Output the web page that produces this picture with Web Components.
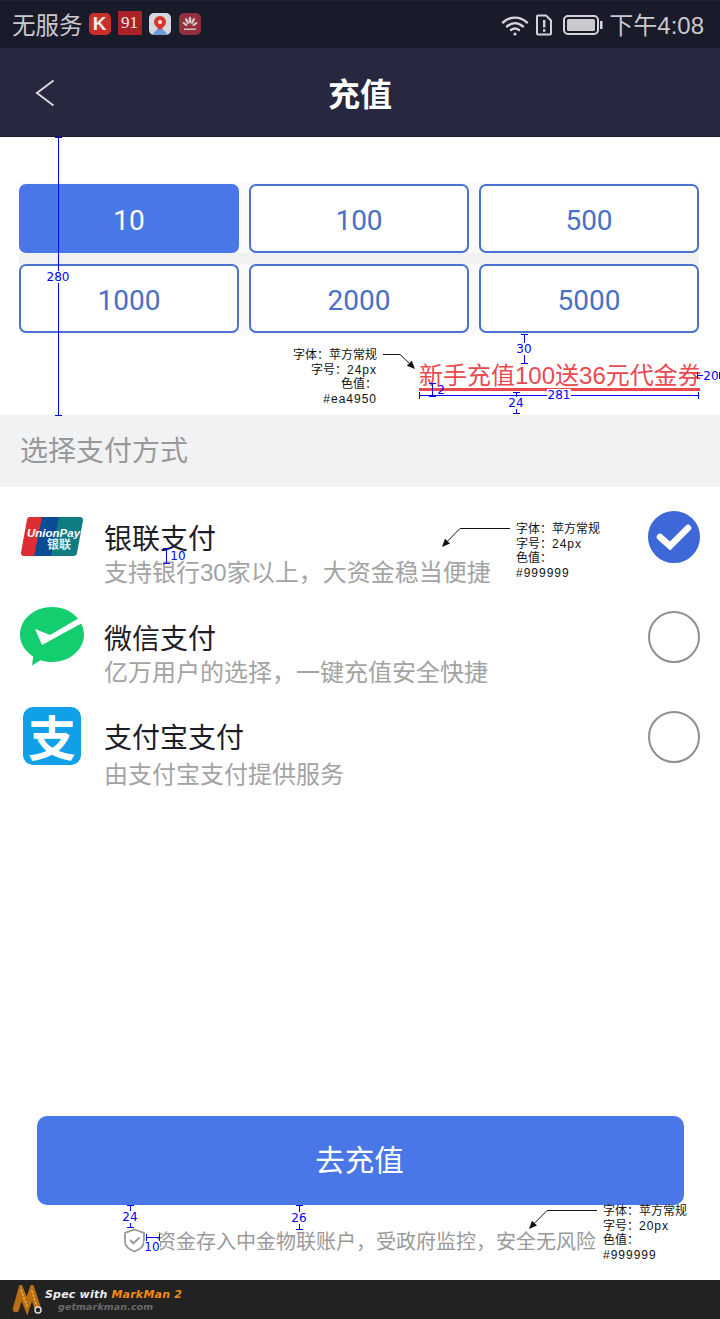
<!DOCTYPE html>
<html lang="zh">
<head>
<meta charset="utf-8">
<title>充值</title>
<style>
html,body{margin:0;padding:0;background:#fff}
body{font-family:"Liberation Sans","Noto Sans CJK SC",sans-serif}
</style>
</head>
<body>
<recharge-page></recharge-page>

<script>
const CJK = '"Liberation Sans","Noto Sans CJK SC",sans-serif'

class StatusBar extends HTMLElement{
    constructor(){
        super()
        this.attachShadow({mode:'open'})
    }
    connectedCallback(){
        this.shadowRoot.innerHTML = `
        <style>
            :host{display:flex;align-items:center;height:48px;background:#191a2a;color:#c9c9ce;font-family:${CJK};font-size:24px;padding:0 16px 0 12px;box-sizing:border-box;border-top:1px solid #23243a}
            .left,.right{display:flex;align-items:center}
            .left span{font-size:23.500px;margin-top:-2px}
            .right{margin-left:auto}
            .app{width:22px;height:22px;border-radius:5px;display:flex;align-items:center;justify-content:center;font-weight:bold;overflow:hidden;margin-top:-1px}
            .k{background:#c9302c;color:#eee;font-size:19px;margin-left:6px}
            .n91{background:#a82228;color:#eee;font-size:17px;border-radius:0;width:24px;height:24px;font-weight:normal;margin-left:7px;margin-top:-3px;font-family:"Liberation Serif",serif}
            .map{background:#d4d8dc;margin-left:7px}
            .hw{background:#93303c;margin-left:8px}
            svg{display:block}
            .time{margin-left:6px;margin-top:-2px}
        </style>
        <div class="left">
            <span>无服务</span>
            <div class="app k">K</div>
            <div class="app n91">91</div>
            <div class="app map"><svg width="22" height="22" viewBox="0 0 22 22"><path d="M3 22L11 13l8 9z" fill="#6d9ad8"/><path d="M11 3a6 6 0 0 1 6 6c0 4-6 8-6 8s-6-4-6-8a6 6 0 0 1 6-6z" fill="#d8342c"/><circle cx="11" cy="9" r="2" fill="#eee"/></svg></div>
            <div class="app hw"><svg width="22" height="22" viewBox="0 0 22 22"><g fill="#d9c8cc"><ellipse cx="11" cy="7" rx="1.3" ry="3.6"/><ellipse cx="8" cy="8" rx="1.2" ry="3.4" transform="rotate(-25 8 8)"/><ellipse cx="14" cy="8" rx="1.2" ry="3.4" transform="rotate(25 14 8)"/><ellipse cx="6" cy="11" rx="1.1" ry="3" transform="rotate(-55 6 11)"/><ellipse cx="16" cy="11" rx="1.1" ry="3" transform="rotate(55 16 11)"/><rect x="5" y="15.5" width="12" height="1.4"/></g></svg></div>
        </div>
        <div class="right">
            <svg width="28" height="24" viewBox="0 0 28 24" fill="none" stroke="#d4d4d8" stroke-width="2.4" stroke-linecap="round"><path d="M2 9.5C9 3 19 3 26 9.5"/><path d="M6 13.5c5-4.4 11-4.4 16 0"/><path d="M10 17c2.600-2 5.400-2 8 0"/><circle cx="14" cy="21" r="1.600" fill="#d4d4d8" stroke="none"/></svg>
            <svg style="margin-left:6px" width="18" height="22" viewBox="0 0 18 22"><path d="M2 2.500a1 1 0 0 1 1-1h8l5 5v13a1 1 0 0 1-1 1H3a1 1 0 0 1-1-1z" fill="none" stroke="#d4d4d8" stroke-width="2"/><rect x="8" y="6" width="2.400" height="7.500" fill="#d4d4d8"/><rect x="8" y="15.200" width="2.400" height="2.600" fill="#d4d4d8"/></svg>
            <svg style="margin-left:10px" width="40" height="22" viewBox="0 0 40 22"><rect x="1" y="2" width="34" height="18" rx="4" fill="none" stroke="#d4d4d8" stroke-width="2"/><rect x="4" y="5" width="28" height="12" rx="1.500" fill="#c9c9ce"/><rect x="37" y="7" width="2.500" height="8" fill="#d4d4d8"/></svg>
            <span class="time">下午4:08</span>
        </div>
        `
    }
}
customElements.define('status-bar', StatusBar)

class NavBar extends HTMLElement{
    constructor(){
        super()
        this.attachShadow({mode:'open'})
    }
    connectedCallback(){
        this.shadowRoot.innerHTML = `
        <style>
            :host{display:flex;align-items:center;justify-content:center;position:relative;height:89px;background:#27273f;color:#fff;font-family:${CJK};border-bottom:1px solid #1a1a2a;box-sizing:border-box}
            h1{margin:0;font-size:32px;font-weight:bold}
            svg{position:absolute;left:35px;top:31px}
        </style>
        <svg width="20" height="28" viewBox="0 0 20 28" fill="none" stroke="#d8d8de" stroke-width="2"><path d="M18.500 1.500L2 14l16.500 12.500"/></svg>
        <h1><slot></slot></h1>
        `
    }
}
customElements.define('nav-bar', NavBar)

class AmountTile extends HTMLElement{
    constructor(){
        super()
        this.attachShadow({mode:'open'})
    }
    connectedCallback(){
        this.shadowRoot.innerHTML = `
        <style>
            :host{display:flex;align-items:center;justify-content:center;height:69px;padding-top:3px;box-sizing:border-box;border:2px solid #4a72d0;border-radius:7px;background:#fff;color:#4a6fc9;font-family:Roboto,sans-serif;font-size:28px}
            :host([selected]){background:#4a77e8;border-color:#4a77e8;color:#fff}
        </style>
        <slot></slot>
        `
    }
}
customElements.define('amount-tile', AmountTile)

class AmountGrid extends HTMLElement{
    constructor(){
        super()
        this.attachShadow({mode:'open'})
    }
    connectedCallback(){
        this.shadowRoot.innerHTML = `
        <style>
            :host{display:grid;grid-template-columns:repeat(3,220px);column-gap:10px;row-gap:11px;margin:45px 21px 0 19px;padding:2px 0;background:linear-gradient(#fafafb 71px,#f0f1f3 71px,#f0f1f3 82px,#fafafb 82px)}
        </style>
        <slot></slot>
        `
    }
}
customElements.define('amount-grid', AmountGrid)

class PromoLine extends HTMLElement{
    constructor(){
        super()
        this.attachShadow({mode:'open'})
    }
    connectedCallback(){
        this.shadowRoot.innerHTML = `
        <style>
            :host{display:flex;justify-content:flex-end;height:80px;padding:25px 20px 0 0;box-sizing:border-box;font-family:${CJK}}
            span{display:block;width:281px;height:31px;line-height:32px;font-size:24px;color:#ea4950;border-bottom:3px solid #ea4950;white-space:nowrap;box-sizing:border-box;text-align:right}
        </style>
        <span><slot></slot></span>
        `
    }
}
customElements.define('promo-line', PromoLine)

class SectionHead extends HTMLElement{
    constructor(){
        super()
        this.attachShadow({mode:'open'})
    }
    connectedCallback(){
        this.shadowRoot.innerHTML = `
        <style>
            :host{display:flex;align-items:center;height:72px;padding-left:20px;padding-bottom:5px;box-sizing:border-box;background:#f1f2f4;color:#999;font-family:${CJK};font-size:28px}
        </style>
        <slot></slot>
        `
    }
}
customElements.define('section-head', SectionHead)

class PayRow extends HTMLElement{
    constructor(){
        super()
        this.attachShadow({mode:'open'})
    }
    connectedCallback(){
        this.shadowRoot.innerHTML = `
        <style>
            :host{display:flex;align-items:center;height:100px;padding:0 20px;box-sizing:border-box;font-family:${CJK}}
            .logo{width:84px;height:64px;flex:none}
            .txt{display:flex;flex-direction:column;flex:1;margin-top:38px}
            .name{font-size:28px;line-height:34px;color:#1d1d28}
            .sub{font-size:24px;line-height:32px;color:#a3a3a3;white-space:nowrap}
            .radio{width:52px;height:52px;flex:none;box-sizing:border-box;border-radius:50%;border:2px solid #8f8f8f;display:flex;align-items:center;justify-content:center}
            :host([checked]) .radio{background:#3e68d8;border-color:#3e68d8}
            svg{display:none}
            :host([checked]) svg{display:block}
        </style>
        <div class="logo"><slot name="logo"></slot></div>
        <div class="txt">
            <div class="name"><slot name="name"></slot></div>
            <div class="sub"><slot name="sub"></slot></div>
        </div>
        <div class="radio"><svg width="36" height="30" viewBox="0 0 36 30" fill="none" stroke="#fff" stroke-width="6.500" stroke-linecap="round"><path d="M4 15l10 9L32 6"/></svg></div>
        `
    }
}
customElements.define('pay-row', PayRow)

class PayLogo extends HTMLElement{
    constructor(){
        super()
        this.attachShadow({mode:'open'})
    }
    connectedCallback(){
        const kind = this.getAttribute('kind')
        let html = ''
        if (kind == 'union') {
            html = `<svg width="64" height="40" viewBox="0 0 64 40" style="margin-top:12px"><path d="M9 0h18l-8 39H4a3 3 0 0 1-3-3.600L7 2.500A3 3 0 0 1 9 0z" fill="#df2e33"/><path d="M22 0h21l-8 39H14z" fill="#0d4c94"/><path d="M39 0h21a3 3 0 0 1 3 3.500L57 36a3.500 3.500 0 0 1-3.500 3H31z" fill="#0f7c82"/><text x="7" y="20" font-family="Liberation Sans" font-size="11.500" font-weight="bold" font-style="italic" fill="#fff">UnionPay</text><text x="27" y="32" font-family="Noto Sans CJK SC" font-size="12" font-weight="bold" fill="#dfeef0">银联</text></svg>`
        } else if (kind == 'wechat') {
            html = `<svg width="64" height="60" viewBox="0 0 64 60" style="margin-top:2px"><path d="M32 0c17.600 0 32 12 32 27.500S49.600 55 32 55c-4 0-8-.6-11.500-1.800L12 58.500l1.200-9C5.200 44.500 0 36.800 0 27.500 0 12 14.400 0 32 0z" fill="#14cd6e"/><path d="M15 22l15 6L59 11l5 4-42 23z" fill="#fff"/></svg>`
        } else {
            html = `<div class="ali">支</div>`
        }
        this.shadowRoot.innerHTML = `
        <style>
            :host{display:block}
            svg{display:block}
            .ali{width:58px;height:58px;margin:2px 0 0 3px;border-radius:10px;background:#0fa0e8;color:#fff;font-family:"Noto Sans CJK SC",sans-serif;font-weight:bold;font-size:48px;line-height:56px;text-align:center}
        </style>
        ${html}
        `
    }
}
customElements.define('pay-logo', PayLogo)

class ChargeButton extends HTMLElement{
    constructor(){
        super()
        this.attachShadow({mode:'open'})
    }
    connectedCallback(){
        this.shadowRoot.innerHTML = `
        <style>
            :host{display:flex;align-items:center;justify-content:center;height:89px;padding:0 2px 5px 0;box-sizing:border-box;margin:0 36px 0 37px;border-radius:10px;background:#4a77e8;color:#fff;font-family:${CJK};font-size:29.500px}
        </style>
        <slot></slot>
        `
    }
}
customElements.define('charge-button', ChargeButton)

class SafeNote extends HTMLElement{
    constructor(){
        super()
        this.attachShadow({mode:'open'})
    }
    connectedCallback(){
        this.shadowRoot.innerHTML = `
        <style>
            :host{display:flex;align-items:center;height:75px;padding:0 0 4px 123px;box-sizing:border-box;color:#999;font-family:${CJK};font-size:20px;white-space:nowrap}
            svg{flex:none;margin-right:10px}
        </style>
        <svg width="23" height="25" viewBox="0 0 23 25" fill="none" stroke="#999" stroke-width="1.800"><path d="M11.500 1.500l9.500 3.500v8c0 5-4 8.500-9.500 10.500C6 21.500 2 18 2 13V5z"/><path d="M7 12l3.500 3.500 6-6"/></svg>
        <slot></slot>
        `
    }
}
customElements.define('safe-note', SafeNote)

class MarkmanBar extends HTMLElement{
    constructor(){
        super()
        this.attachShadow({mode:'open'})
    }
    connectedCallback(){
        this.shadowRoot.innerHTML = `
        <style>
            :host{display:flex;align-items:center;height:39px;background:#222;padding-left:12px;font-family:"DejaVu Sans",sans-serif;font-weight:bold;font-style:italic}
            svg{flex:none}
            .t{margin:2px 0 0 3px;display:flex;flex-direction:column}
            .a{font-size:11px;line-height:13px;color:#eee;letter-spacing:.2px;white-space:nowrap}
            .a b{color:#f08c10}
            .b{font-size:9.500px;line-height:12px;color:#6a6a6a;margin-left:13px;letter-spacing:.1px}
        </style>
        <svg width="30" height="30" viewBox="0 0 30 30" fill="none" stroke-linecap="round"><path d="M4 24L9 6l6 15 5-15 6 18" stroke="#b86f14" stroke-width="6.500"/><path d="M9 5l6 16M20 6l5 16" stroke="#eeb04a" stroke-width="1.500" stroke-dasharray="1.500 2.500"/><circle cx="26" cy="25" r="3" fill="#222" stroke="#ddd" stroke-width="1.500"/></svg>
        <div class="t">
            <div class="a">Spec with <b>MarkMan 2</b></div>
            <div class="b">getmarkman.com</div>
        </div>
        `
    }
}
customElements.define('markman-bar', MarkmanBar)

// annotation text with its arrow, lies on top of the design
class SpecNote extends HTMLElement{
    constructor(){
        super()
        this.attachShadow({mode:'open'})
    }
    connectedCallback(){
        const x = this.getAttribute('x'), y = this.getAttribute('y')
        const align = this.getAttribute('align') || 'left'
        const lines = this.getAttribute('lines').split('|')
        this.shadowRoot.innerHTML = `
        <style>
            :host{display:block;position:absolute;left:${x}px;top:${y}px;font:12px/14.500px "Liberation Sans","Noto Sans CJK SC",sans-serif;color:#111;text-align:${align};white-space:nowrap}
            div{height:14.500px}
            span{letter-spacing:1px}
        </style>
        ${lines.map(l => `<div>${l.replace(/[#\w]+/g, m => `<span>${m}</span>`)}</div>`).join('')}
        `
    }
}
customElements.define('spec-note', SpecNote)

// blue dimension marks and black arrows
class SpecMarks extends HTMLElement{
    constructor(){
        super()
        this.attachShadow({mode:'open'})
    }
    connectedCallback(){
        const vert = [[58,137,416,'280',58,277],[524,334,364,'30',524,349],[516,392,414,'24',516,403],[432,383,397,'2',441,390,1],[166,548,564,'10',178,556,1],[130,1205,1228,'24',130,1217],[299,1205,1230,'26',299,1218]]
        const horiz = [[419,699,395,'281',559,395],[697,720,375,'20',711,376],[146,160,1237,'10',152,1247]]
        let s = ''
        for (const [x,a,b,t,tx,ty,nobg] of vert) {
            s += `<path d="M${x+.5} ${a}V${b}M${x-3} ${a+.5}h7M${x-3} ${b-.5}h7"/>`
            s += this.label(t,tx,ty,nobg)
        }
        for (const [a,b,y,t,tx,ty] of horiz) {
            s += `<path d="M${a} ${y+.5}H${b}M${a+.5} ${y-3}v7M${b-.5} ${y-3}v7"/>`
            s += this.label(t,tx,ty)
        }
        const arrows = [[383,354,400,354,415,369],[510,528,460,528,442,547],[597,1210,547,1210,529,1229]]
        let a = ''
        for (const [x1,y1,x2,y2,x3,y3] of arrows) {
            const d = Math.hypot(x3-x2,y3-y2), ux = (x3-x2)/d, uy = (y3-y2)/d
            const bx = x3-ux*8, by = y3-uy*8
            a += `<path d="M${x1} ${y1+.5}H${x2}L${bx} ${by}"/><polygon fill="#111" points="${x3},${y3} ${bx-uy*3.5},${by+ux*3.5} ${bx+uy*3.5},${by-ux*3.5}"/>`
        }
        this.shadowRoot.innerHTML = `
        <style>
            :host{display:block;position:absolute;left:0;top:0;width:720px;height:1319px;pointer-events:none}
            svg{display:block}
            path{stroke:#0000ff;fill:none}
            text{font:12px "DejaVu Sans",sans-serif;fill:#0000ff;text-anchor:middle;dominant-baseline:middle}
            .bg{fill:#fff;stroke:none}
            .arrows path{stroke:#111}
        </style>
        <svg width="720" height="1319" viewBox="0 0 720 1319">${s}<g class="arrows">${a}</g></svg>
        `
    }
    label(t,x,y,nobg){
        const w = t.length * 8
        const bg = nobg ? '' : `<rect class="bg" x="${x-w/2}" y="${y-6}" width="${w}" height="12"/>`
        return `${bg}<text x="${x}" y="${y}">${t}</text>`
    }
}
customElements.define('spec-marks', SpecMarks)

class RechargePage extends HTMLElement{
    constructor(){
        super()
        this.attachShadow({mode:'open'})
    }
    connectedCallback(){
        this.shadowRoot.innerHTML = `
        <style>
            :host{display:flex;flex-direction:column;position:relative;width:720px;height:1319px;overflow:hidden;background:#fff}
            .bottom{margin-top:auto}
            span[slot=name],span[slot=sub]{white-space:nowrap}
            span.low{display:block;margin-top:3px}
        </style>
        <status-bar></status-bar>
        <nav-bar>充值</nav-bar>
        <amount-grid>
            <amount-tile selected>10</amount-tile>
            <amount-tile>100</amount-tile>
            <amount-tile>500</amount-tile>
            <amount-tile>1000</amount-tile>
            <amount-tile>2000</amount-tile>
            <amount-tile>5000</amount-tile>
        </amount-grid>
        <promo-line>新手充值100送36元代金券</promo-line>
        <section-head>选择支付方式</section-head>
        <div class="list">
            <pay-row checked>
                <pay-logo slot="logo" kind="union"></pay-logo>
                <span slot="name">银联支付</span>
                <span slot="sub">支持银行30家以上，大资金稳当便捷</span>
            </pay-row>
            <pay-row>
                <pay-logo slot="logo" kind="wechat"></pay-logo>
                <span slot="name">微信支付</span>
                <span slot="sub">亿万用户的选择，一键充值安全快捷</span>
            </pay-row>
            <pay-row>
                <pay-logo slot="logo" kind="alipay"></pay-logo>
                <span slot="name">支付宝支付</span>
                <span slot="sub" class="low">由支付宝支付提供服务</span>
            </pay-row>
        </div>
        <div class="bottom">
            <charge-button>去充值</charge-button>
            <safe-note>资金存入中金物联账户，受政府监控，安全无风险</safe-note>
            <markman-bar></markman-bar>
        </div>
        <spec-marks></spec-marks>
        <spec-note x="293" y="348" align="right" lines="字体：苹方常规|字号：24px|色值：|#ea4950"></spec-note>
        <spec-note x="516" y="522" lines="字体：苹方常规|字号：24px|色值：|#999999"></spec-note>
        <spec-note x="603" y="1204" lines="字体：苹方常规|字号：20px|色值：|#999999"></spec-note>
        `
    }
}
customElements.define('recharge-page', RechargePage)
</script>
</body>
</html>
